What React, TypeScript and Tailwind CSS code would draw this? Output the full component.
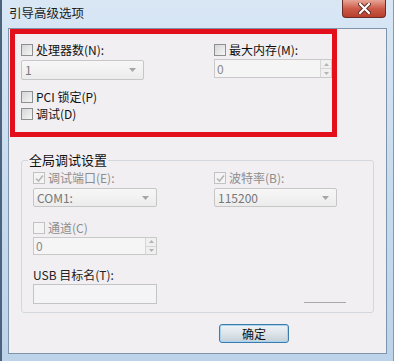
import React from 'react';

const font = { fontFamily: '"Noto Sans CJK SC", "Liberation Sans", sans-serif' };

function Check({ checked = false, disabled = false }: { checked?: boolean; disabled?: boolean }) {
  return (
    <div
      className={`w-[12px] h-[12px] shrink-0 border flex items-center justify-center ${
        disabled ? 'border-[#c2c2c2] bg-[#f4f4f4]' : 'border-[#8e8f8f] bg-gradient-to-br from-[#d6d6d6] to-[#f6f6f6]'
      }`}
    >
      {checked && (
        <svg width="9" height="9" viewBox="0 0 9 9">
          <path d="M1 4.5 L3.5 7 L8 1.5" fill="none" stroke={disabled ? '#b5b5b5' : '#333'} strokeWidth="1.6" />
        </svg>
      )}
    </div>
  );
}

function CheckRow({
  label,
  checked = false,
  disabled = false,
}: {
  label: string;
  checked?: boolean;
  disabled?: boolean;
}) {
  return (
    <div className="flex items-center gap-[3px] h-[12px]">
      <Check checked={checked} disabled={disabled} />
      <span className={`text-[12px] leading-[12px] whitespace-pre ${disabled ? 'text-[#8d8d8d]' : 'text-[#111]'}`}>
        {label}
      </span>
    </div>
  );
}

function Combo({ value, w, h = 'h-[20px]' }: { value: string; w: string; h?: string }) {
  return (
    <div
      className={`${w} ${h} flex items-center justify-between border border-[#c6c6c6] rounded-[2px] bg-gradient-to-b from-[#f7f7f7] to-[#ececec] pl-[3px] pr-[7px]`}
    >
      <span className="text-[12px] leading-[12px] text-[#777]">{value}</span>
      <svg width="7" height="4" viewBox="0 0 7 4">
        <path d="M0 0 L7 0 L3.5 4 Z" fill="#a6a6a6" />
      </svg>
    </div>
  );
}

function Spin({ value, w, h }: { value: string; w: string; h: string }) {
  return (
    <div className={`${w} ${h} flex border border-[#c9c9c9] bg-[#f5f5f5]`}>
      <div className="flex-1 flex items-center pl-[2px] text-[12px] leading-[12px] text-[#8a8a8a]">{value}</div>
      <div className="w-[11px] flex flex-col border-l border-[#d6d6d6]">
        <div className="flex-1 flex items-center justify-center border-b border-[#d6d6d6] bg-[#f0f0f0]">
          <svg width="5" height="3" viewBox="0 0 5 3">
            <path d="M0 3 L5 3 L2.5 0 Z" fill="#b3b3b3" />
          </svg>
        </div>
        <div className="flex-1 flex items-center justify-center bg-[#f0f0f0]">
          <svg width="5" height="3" viewBox="0 0 5 3">
            <path d="M0 0 L5 0 L2.5 3 Z" fill="#b3b3b3" />
          </svg>
        </div>
      </div>
    </div>
  );
}

export default function App() {
  return (
    <div
      style={font}
      className="w-[394px] h-[361px] overflow-hidden border-l-[2px] border-r border-l-[#4d637d] border-r-[#7d9bbb] bg-gradient-to-b from-[#d9e7f5] via-[#c8dcef] to-[#bcd3ea]"
    >
      <div className="h-[28px] flex items-start justify-between">
        <div className="pl-[7px] pt-[6px] text-[12.5px] leading-[14px] text-[#1b1b1b]">引导高级选项</div>
        <div className="mr-[7px] w-[44px] h-[18px] rounded-b-[4px] border border-t-0 border-[#6e2a24] bg-gradient-to-b from-[#e7a597] via-[#cd5b49] to-[#b63f2c] flex items-center justify-center">
          <svg width="13" height="11" viewBox="0 0 13 11">
            <path d="M2 1 L11 10 M11 1 L2 10" stroke="#5a2a24" strokeWidth="4" strokeLinecap="round" />
            <path d="M2 1 L11 10 M11 1 L2 10" stroke="#ffffff" strokeWidth="2.2" strokeLinecap="round" />
          </svg>
        </div>
      </div>

      <div className="ml-[6px] w-[379px] h-[326px] border border-[#7e94ab] bg-[#f1eff2]">
        <div className="ml-[1px] w-[327px] h-[108px] border-[5px] border-[#e3101c]">
          <div className="mt-[10px] pl-[6px] grid grid-cols-[193px_1fr]">
            <div>
              <CheckRow label="处理器数(N):" />
              <div className="mt-[4px]">
                <Combo value="1" w="w-[123px]" />
              </div>
            </div>
            <div>
              <CheckRow label="最大内存(M):" />
              <div className="mt-[3px]">
                <Spin value="0" w="w-[118px]" h="h-[19px]" />
              </div>
            </div>
          </div>
          <div className="pl-[6px] mt-[11px]">
            <CheckRow label="PCI 锁定(P)" />
          </div>
          <div className="pl-[6px] mt-[5px]">
            <CheckRow label="调试(D)" />
          </div>
        </div>

        <fieldset className="ml-[12px] mt-[15px] w-[353px] border border-[#d3d8de] rounded-[3px] pb-[8px]">
          <legend className="ml-[6px] px-[1px] text-[13px] leading-[16px] text-[#111]">全局调试设置</legend>
          <div className="pt-[4px] pl-[11px] grid grid-cols-[181px_1fr]">
            <div>
              <CheckRow label="调试端口(E):" checked disabled />
              <div className="mt-[4px]">
                <Combo value="COM1:" w="w-[124px]" h="h-[19px]" />
              </div>
            </div>
            <div>
              <CheckRow label="波特率(B):" checked disabled />
              <div className="mt-[4px]">
                <Combo value="115200" w="w-[123px]" h="h-[19px]" />
              </div>
            </div>
          </div>
          <div className="pl-[11px] mt-[15px]">
            <CheckRow label="通道(C)" disabled />
            <div className="mt-[3px]">
              <Spin value="0" w="w-[124px]" h="h-[18px]" />
            </div>
            <div className="mt-[13px] text-[12px] leading-[14px] text-[#222] whitespace-pre">USB 目标名(T):</div>
            <div className="mt-[2px] flex items-end">
              <div className="w-[124px] h-[20px] border border-[#c4c4c4] bg-[#f4f3f5]" />
              <div className="ml-[147px] mb-[1px] w-[42px] h-px bg-[#a8a8a8]" />
            </div>
          </div>
        </fieldset>

        <div className="mt-[11px] ml-[210px] flex items-center">
          <div className="w-[70px] h-[19px] rounded-[3px] border border-[#3d7bad] bg-gradient-to-b from-[#eef3f7] via-[#dde4ea] to-[#c6d0d8] shadow-[inset_0_0_0_1px_#a7d5f0] flex items-center justify-center text-[12px] leading-[12px] text-[#111]">
            确定
          </div>
        </div>
      </div>
    </div>
  );
}
